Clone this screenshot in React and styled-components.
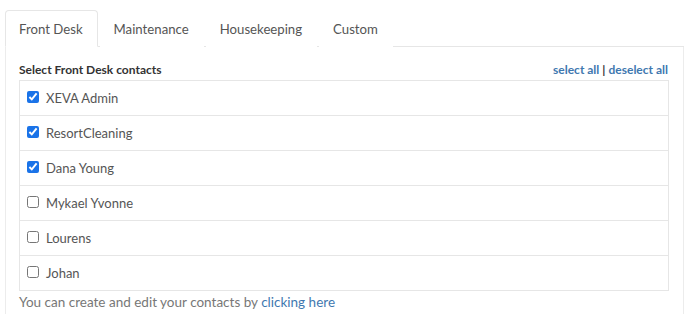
import React, { useState } from 'react';
import styled, { createGlobalStyle } from 'styled-components';

const GlobalStyle = createGlobalStyle`
    body {
        margin: 0;
        background: #fff;
        font-family: Lato, "Open Sans", "Liberation Sans", sans-serif;
        color: #555;
    }
`;

const contacts = [
    { name: 'XEVA Admin', checked: true },
    { name: 'ResortCleaning', checked: true },
    { name: 'Dana Young', checked: true },
    { name: 'Mykael Yvonne', checked: false },
    { name: 'Lourens', checked: false },
    { name: 'Johan', checked: false },
];

const tabs = ['Front Desk', 'Maintenance', 'Housekeeping', 'Custom'];

export default function App() {
    const [active, setActive] = useState(0);
    const [list, setList] = useState(contacts);

    const toggle = (i) => {
        setList(list.map((c, idx) => (idx === i ? { ...c, checked: !c.checked } : c)));
    };
    const setAll = (v) => setList(list.map((c) => ({ ...c, checked: v })));

    return (
        <>
            <GlobalStyle />
            <Wrapper>
                <TabBar>
                    {tabs.map((t, i) => (
                        <Tab key={t} $active={i === active} onClick={() => setActive(i)}>
                            {t}
                        </Tab>
                    ))}
                </TabBar>
                <Panel>
                    <HeaderRow>
                        <Title>Select {tabs[active]} contacts</Title>
                        <Actions>
                            <LinkText onClick={() => setAll(true)}>select all</LinkText>
                            <Divider>|</Divider>
                            <LinkText onClick={() => setAll(false)}>deselect all</LinkText>
                        </Actions>
                    </HeaderRow>
                    <List>
                        {list.map((c, i) => (
                            <Row key={c.name}>
                                <Check type="checkbox" checked={c.checked} onChange={() => toggle(i)} />
                                <Name>{c.name}</Name>
                            </Row>
                        ))}
                    </List>
                    <Footer>
                        You can create and edit your contacts by <FooterLink>clicking here</FooterLink>
                    </Footer>
                </Panel>
            </Wrapper>
        </>
    );
}

const Wrapper = styled.div`
    padding: 10px 4px 0 5px;
`;

const TabBar = styled.div`
    display: flex;
    border-bottom: 1px solid #e6e6e6;
    height: 36px;
`;

const Tab = styled.div`
    box-sizing: border-box;
    height: 37px;
    padding: 0 14px 0 13px;
    margin-right: 2px;
    display: flex;
    align-items: center;
    font-size: 13.2px;
    color: #555;
    cursor: pointer;
    border: 1px solid ${(p) => (p.$active ? '#e6e6e6' : 'transparent')};
    border-bottom-color: ${(p) => (p.$active ? '#fff' : 'transparent')};
    border-radius: 4px 4px 0 0;
    background: #fff;
`;

const Panel = styled.div`
    border: 1px solid #ececec;
    border-top: none;
    padding: 12px 14px 20px 13px;
`;

const HeaderRow = styled.div`
    display: flex;
    justify-content: space-between;
    align-items: center;
    height: 21px;
`;

const Title = styled.div`
    font-size: 12px;
    font-weight: 700;
    color: #333;
`;

const Actions = styled.div`
    display: flex;
    align-items: center;
    gap: 3px;
    font-size: 12px;
    font-weight: 700;
    margin-right: 1px;
`;

const LinkText = styled.span`
    color: #3f78b0;
    cursor: pointer;
`;

const Divider = styled.span`
    color: #333;
`;

const List = styled.div`
    border: 1px solid #e6e6e6;
    border-bottom: none;
`;

const Row = styled.label`
    display: flex;
    align-items: center;
    height: 34px;
    border-bottom: 1px solid #e6e6e6;
    padding-left: 7px;
    cursor: pointer;
`;

const Check = styled.input`
    width: 12px;
    height: 12px;
    margin: 0 7px 2px 0;
    accent-color: #1a73e8;
`;

const Name = styled.span`
    font-size: 13px;
    color: #555;
`;

const Footer = styled.div`
    font-size: 13.5px;
    color: #777;
    margin-top: 3px;
`;

const FooterLink = styled.span`
    color: #3f78b0;
    cursor: pointer;
`;
